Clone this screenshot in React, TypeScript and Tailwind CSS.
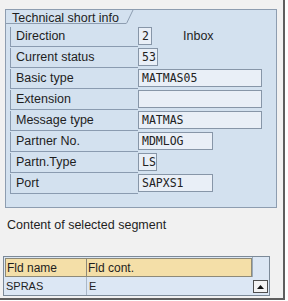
const rows = [
  { label: "Direction", value: "2", w: "w-[14px]", extra: "Inbox" },
  { label: "Current status", value: "53", w: "w-[20px]" },
  { label: "Basic type", value: "MATMAS05", w: "w-[124px]" },
  { label: "Extension", value: "", w: "w-[124px]" },
  { label: "Message type", value: "MATMAS", w: "w-[124px]" },
  { label: "Partner No.", value: "MDMLOG", w: "w-[75px]" },
  { label: "Partn.Type", value: "LS", w: "w-[19px]" },
  { label: "Port", value: "SAPXS1", w: "w-[75px]" },
];

const sans = "font-['Liberation_Sans',Arial,sans-serif]";
const mono = "font-['DejaVu_Sans_Mono',monospace]";

export default function App() {
  return (
    <div className="w-[288px] h-[301px] bg-white">
      <div className={`w-[285px] h-[300px] bg-[#f1f1f1] border-r-2 border-b-2 border-[#5e5e5e] ${sans} text-[#1e1e1e]`}>
        {/* technical short info panel */}
        <div className="ml-[5px] pt-[9px]">
          <div className="w-[272px] h-[199px] border border-[#8d9db0] bg-[#d3e1ef]">
            <div className="flex h-[14px]">
              <div className="w-[120px] h-[14px] border-b border-[#8d9db0] pl-[6px] text-[12.5px] leading-[16px] whitespace-nowrap">
                Technical short info
              </div>
              <svg width="8" height="14" viewBox="0 0 8 14" className="block">
                <line x1="0.5" y1="13.5" x2="7" y2="0" stroke="#8d9db0" strokeWidth="1" />
              </svg>
            </div>
            <div className="mt-[3px] pl-[4px] flex flex-col">
              {rows.map((r) => (
                <div key={r.label} className="flex items-start h-[21px]">
                  <div className="w-[128px] h-[20px] border-l border-b border-[#8a9bb0] pl-[5px] text-[12.5px] leading-[19px]">
                    {r.label}
                  </div>
                  <div
                    className={`${r.w} h-[18px] border border-[#8796a8] bg-[#e9eff7] ${mono} text-[11.5px] leading-[16px] pl-[3px] text-[#222]`}
                  >
                    {r.value}
                  </div>
                  {r.extra && (
                    <div className="ml-[31px] text-[12.5px] leading-[19px]">{r.extra}</div>
                  )}
                </div>
              ))}
            </div>
          </div>
        </div>

        <div className="ml-[7px] mt-[10px] text-[12.5px] leading-[15px]">Content of selected segment</div>

        {/* segment table */}
        <div className="ml-[3px] mt-[23px] w-[267px] border border-[#7c8a98] bg-[#dce7f4]">
          <div className="flex h-[20px] text-[12px] leading-[18px]">
            <div className="w-[82px] ml-[1px] mt-[1px] h-[19px] bg-[#f4dfa8] border border-[#8e8a78] pl-[1px]">Fld name</div>
            <div className="w-[165px] mt-[1px] h-[19px] bg-[#f4dfa8] border border-l-0 border-[#8e8a78] pl-[1px]">Fld cont.</div>
            <div className="flex-1 border-l border-[#9aaabb]" />
          </div>
          <div className="flex h-[18px] text-[11px] leading-[18px]">
            <div className="w-[83px] border-r border-[#aab8c8] pl-[2px]">SPRAS</div>
            <div className="w-[165px] pl-[2px]">E</div>
            <div className="flex-1 pl-[1px] pt-[3px]">
              <div className="w-[15px] h-[13px] border border-[#4e4e4e] bg-[#f3f3f3] flex items-center justify-center">
                <svg width="7" height="4" viewBox="0 0 7 4">
                  <path d="M0 4 L3.5 0 L7 4 Z" fill="#111" />
                </svg>
              </div>
            </div>
          </div>
        </div>
      </div>
    </div>
  );
}
